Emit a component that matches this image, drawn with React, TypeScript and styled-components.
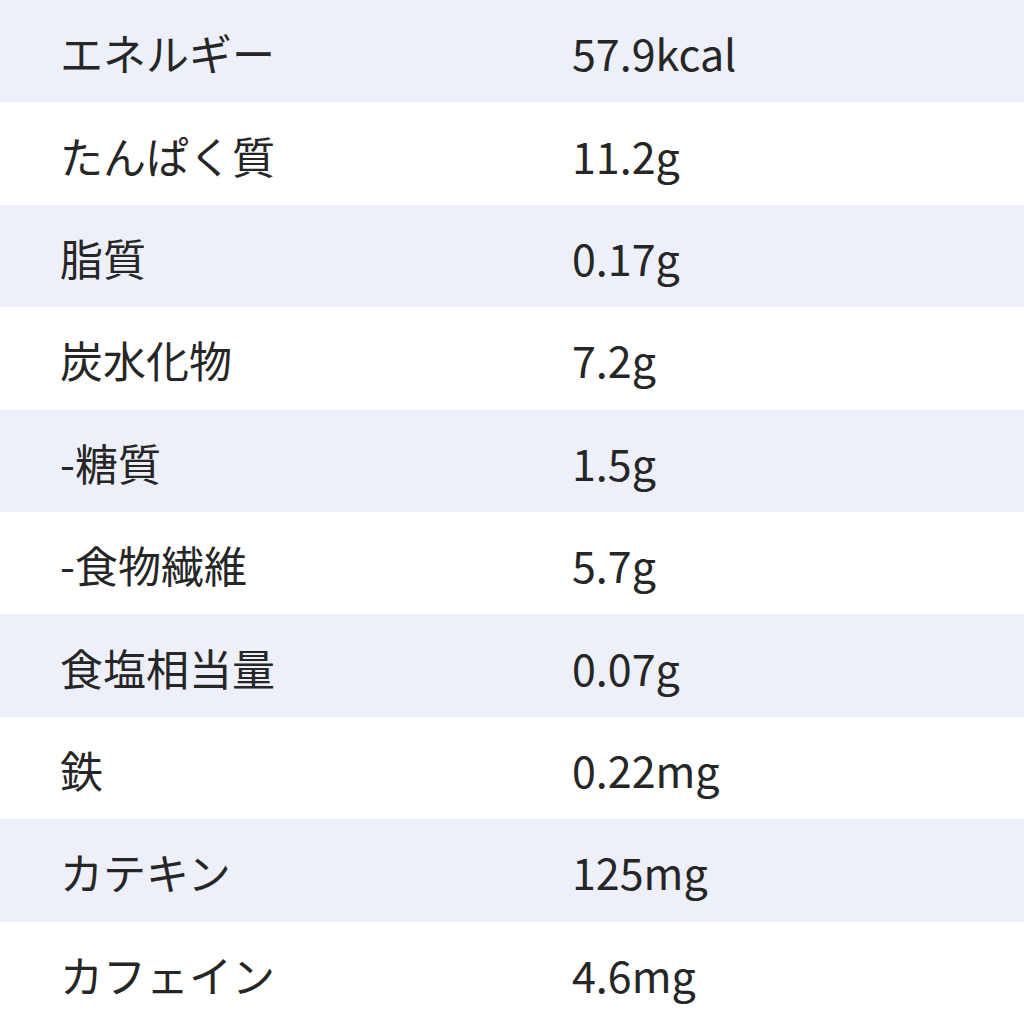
import React from "react";
import styled, { createGlobalStyle } from "styled-components";

const GlobalStyle = createGlobalStyle`
	html, body {
		margin: 0;
		padding: 0;
		background: #ffffff;
	}
	body {
		font-family: "Noto Sans CJK JP", "Noto Sans", sans-serif;
	}
`;

const Table = styled.div`
	display: grid;
	grid-template-columns: 1fr 1fr;
	grid-auto-rows: 102.4px;
	width: 1024px;
	height: 1024px;
`;

const Row = styled.div<{ $shaded: boolean }>`
	display: contents;
	& > div {
		background-color: ${(p) => (p.$shaded ? "#eef0f9" : "#ffffff")};
	}
`;

const Cell = styled.div`
	display: flex;
	align-items: center;
	padding-left: 60px;
	padding-top: 3px;
	font-size: 43px;
	line-height: 1;
	color: #262626;
`;

const rows: [string, string][] = [
	["エネルギー", "57.9kcal"],
	["たんぱく質", "11.2g"],
	["脂質", "0.17g"],
	["炭水化物", "7.2g"],
	["-糖質", "1.5g"],
	["-食物繊維", "5.7g"],
	["食塩相当量", "0.07g"],
	["鉄", "0.22mg"],
	["カテキン", "125mg"],
	["カフェイン", "4.6mg"],
];

const App = () => {
	return (
		<>
			<GlobalStyle />
			<Table>
				{rows.map(([label, value], i) => (
					<Row key={label} $shaded={i % 2 === 0}>
						<Cell>{label}</Cell>
						<Cell>{value}</Cell>
					</Row>
				))}
			</Table>
		</>
	);
};

export default App;
